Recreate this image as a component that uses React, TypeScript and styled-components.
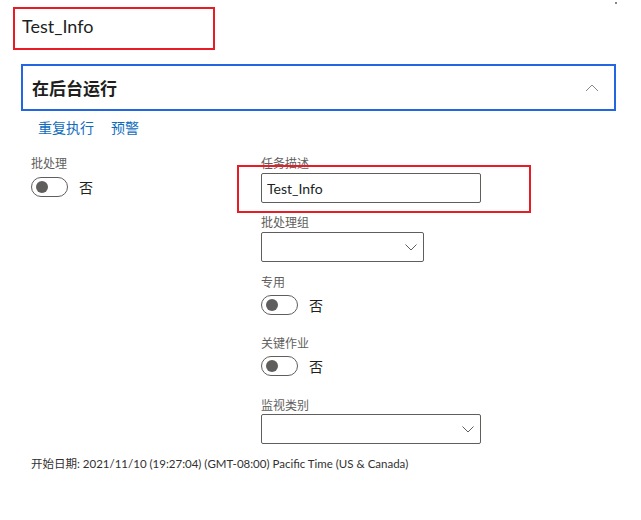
import React from 'react';
import styled, { createGlobalStyle } from 'styled-components';

const GlobalStyle = createGlobalStyle`
  html, body {
    margin: 0;
    padding: 0;
    background: #ffffff;
  }
  body {
    font-family: "Segoe UI", "Lato", "Noto Sans CJK SC", sans-serif;
    color: #201f1e;
  }
`;

const Page = styled.div`
  position: relative;
  width: 641px;
  height: 520px;
  overflow: hidden;
`;

const CornerDot = styled.span`
  position: absolute;
  top: 2px;
  left: 615px;
  width: 2px;
  height: 2px;
  background: #8a8886;
`;

const TitleBox = styled.div`
  box-sizing: border-box;
  margin: 7px 0 0 13px;
  width: 202px;
  height: 43px;
  border: 2px solid #e81c24;
  padding: 5px 0 0 7px;
`;

const Title = styled.h1`
  margin: 0;
  font-size: 18px;
  font-weight: 400;
  line-height: 24px;
  color: #201f1e;
`;

const Section = styled.section`
  margin: 14px 0 0 21px;
  width: 595px;
`;

const PanelHeader = styled.div`
  box-sizing: border-box;
  height: 47px;
  display: flex;
  align-items: center;
  justify-content: space-between;
  border: 2px solid #2266e3;
  padding: 0 15px 0 9px;
`;

const PanelTitle = styled.h2`
  margin: 0;
  font-size: 17px;
  font-weight: 600;
  color: #201f1e;
`;

const Links = styled.div`
  display: flex;
  gap: 17px;
  margin: 7px 0 0 17px;
  line-height: 20px;
`;

const LinkButton = styled.a`
  font-size: 14px;
  color: #0f6cbd;
  cursor: pointer;
`;

const Columns = styled.div`
  display: grid;
  grid-template-columns: 230px 1fr;
  margin: 17px 0 0 10px;
`;

const Column = styled.div`
  display: flex;
  flex-direction: column;
`;

const Field = styled.div<{ $gap: number }>`
  position: relative;
  display: flex;
  flex-direction: column;
  margin-bottom: ${({ $gap }) => $gap}px;
`;

const Label = styled.label<{ $space: number }>`
  font-size: 12px;
  line-height: 16px;
  padding-top: 1px;
  color: #605e5c;
  margin-bottom: ${({ $space }) => $space - 1}px;
`;

const TextInput = styled.input`
  box-sizing: border-box;
  width: 220px;
  height: 30px;
  border: 1px solid #605e5c;
  border-radius: 2px;
  padding: 0 5px;
  font: inherit;
  font-size: 14px;
  color: #201f1e;
  outline: none;
`;

const SelectBox = styled.div<{ $width: number }>`
  box-sizing: border-box;
  width: ${({ $width }) => $width}px;
  height: 30px;
  border: 1px solid #605e5c;
  border-radius: 2px;
  display: flex;
  align-items: center;
  justify-content: flex-end;
  padding-right: 4px;
`;

const Highlight = styled.div`
  position: absolute;
  left: -24px;
  top: 10px;
  width: 294px;
  height: 48px;
  box-sizing: border-box;
  border: 2px solid #e81c24;
  pointer-events: none;
`;

const ToggleRow = styled.div`
  display: flex;
  align-items: center;
  gap: 11px;
  height: 20px;
`;

const ToggleTrack = styled.span`
  box-sizing: border-box;
  position: relative;
  width: 37px;
  height: 20px;
  border: 1px solid #605e5c;
  border-radius: 10px;
  &::after {
    content: "";
    position: absolute;
    top: 3px;
    left: 4px;
    width: 12px;
    height: 12px;
    border-radius: 50%;
    background: #605e5c;
  }
`;

const ToggleText = styled.span`
  font-size: 14px;
  color: #201f1e;
`;

const Footer = styled.div`
  margin: 0 0 0 10px;
  font-size: 11.5px;
  line-height: 16px;
  color: #323130;
`;

const ChevronDown = () => (
  <svg width="16" height="16" viewBox="0 0 16 16" fill="none">
    <path d="M2.5 5.5 L8 11 L13.5 5.5" stroke="#605e5c" strokeWidth="1" />
  </svg>
);

const ChevronUp = () => (
  <svg width="14" height="14" viewBox="0 0 14 14" fill="none">
    <path d="M1 10 L7 4 L13 10" stroke="#8a8886" strokeWidth="1" />
  </svg>
);

const Toggle = ({ label }: { label: string }) => (
  <ToggleRow>
    <ToggleTrack />
    <ToggleText>{label}</ToggleText>
  </ToggleRow>
);

export default function App(): JSX.Element {
  return (
    <Page>
      <GlobalStyle />
      <CornerDot />
      <TitleBox>
        <Title>Test_Info</Title>
      </TitleBox>
      <Section>
        <PanelHeader>
          <PanelTitle>在后台运行</PanelTitle>
          <ChevronUp />
        </PanelHeader>
        <Links>
          <LinkButton>重复执行</LinkButton>
          <LinkButton>预警</LinkButton>
        </Links>
        <Columns>
          <Column>
            <Field $gap={0}>
              <Label $space={6}>批处理</Label>
              <Toggle label="否" />
            </Field>
          </Column>
          <Column>
            <Field $gap={11}>
              <Label $space={2}>任务描述</Label>
              <TextInput defaultValue="Test_Info" />
              <Highlight />
            </Field>
            <Field $gap={12}>
              <Label $space={2}>批处理组</Label>
              <SelectBox $width={163}>
                <ChevronDown />
              </SelectBox>
            </Field>
            <Field $gap={20}>
              <Label $space={5}>专用</Label>
              <Toggle label="否" />
            </Field>
            <Field $gap={21}>
              <Label $space={5}>关键作业</Label>
              <Toggle label="否" />
            </Field>
            <Field $gap={12}>
              <Label $space={1}>监视类别</Label>
              <SelectBox $width={220}>
                <ChevronDown />
              </SelectBox>
            </Field>
          </Column>
        </Columns>
        <Footer>开始日期: 2021/11/10 (19:27:04) (GMT-08:00) Pacific Time (US &amp; Canada)</Footer>
      </Section>
    </Page>
  );
}
